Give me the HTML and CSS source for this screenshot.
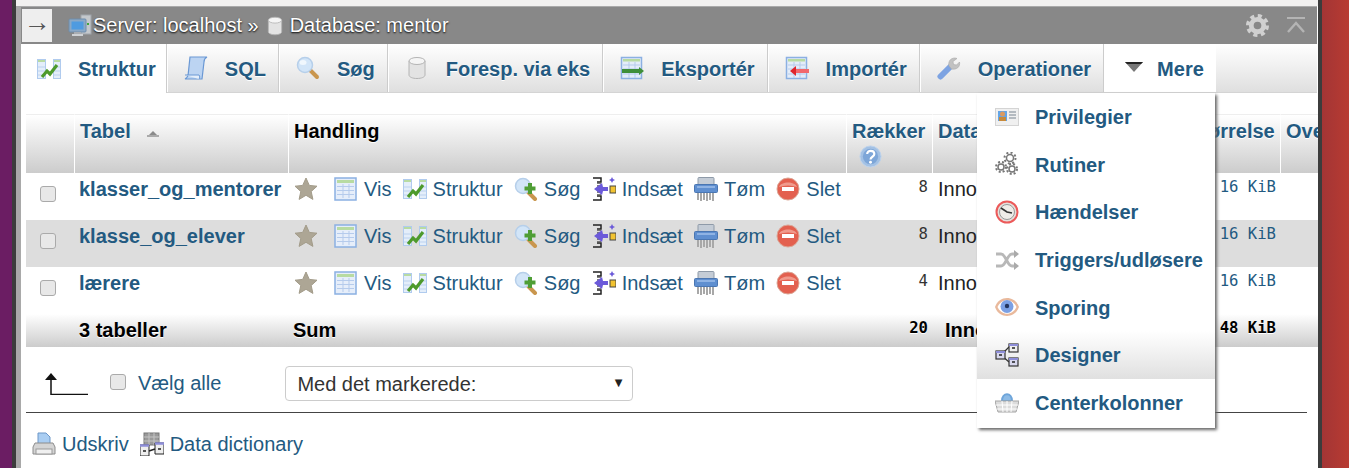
FILE: index.html
```html
<!DOCTYPE html>
<html lang="da">
<head>
<meta charset="utf-8">
<title>phpMyAdmin - mentor</title>
<link rel="stylesheet" href="styles.css">
</head>
<body>
<svg class="sprite" xmlns="http://www.w3.org/2000/svg">
  <symbol id="i-server" viewBox="0 0 24 24"><rect x="13" y="1" width="10" height="19" fill="#c4c8cc" stroke="#a0a5ab"/><rect x="19" y="9" width="2" height="2" fill="#3fa63f"/><rect x="1" y="5" width="17" height="13" rx="1" fill="#8aa8c6" stroke="#6f8dab"/><rect x="3.500" y="7.500" width="12" height="8" fill="#4f9be0"/><rect x="6" y="18" width="7" height="2" fill="#a9adb2"/><rect x="4" y="20" width="11" height="2" fill="#ced1d4"/></symbol>
  <symbol id="i-db" viewBox="0 0 24 24"><path d="M4 5v14c0 2 3.500 3.500 8 3.500s8-1.500 8-3.500V5z" fill="#e3e3e3" stroke="#b4b4b4"/><ellipse cx="12" cy="5" rx="8" ry="3.500" fill="#f5f5f5" stroke="#b4b4b4"/></symbol>
  <symbol id="i-struct" viewBox="0 0 24 24"><rect x="0.500" y="2.500" width="8" height="19" fill="#e4eefa" stroke="#b0cbee"/><rect x="16.500" y="2.500" width="7" height="19" fill="#e4eefa" stroke="#b0cbee"/><rect x="1" y="3" width="7" height="2" fill="#b8dba2"/><rect x="17" y="3" width="6" height="2" fill="#b8dba2"/><path d="M1 10h7M1 14h7M1 18h7M17 10h6M17 14h6M17 18h6" stroke="#bcd2ef"/><path d="M5 20l5-6 3 3 7-9" fill="none" stroke="#4d9a2c" stroke-width="3.200"/></symbol>
  <symbol id="i-sql" viewBox="0 0 24 24"><path d="M6 1h17c-2 1-3 3-3 5L18 23H1c2-1 3-3 3.200-5z" fill="#bcd4f2" stroke="#6a98d4" stroke-width="1.200"/><path d="M1 19h14c1 1 1 3 0 4" fill="#e4eefa" stroke="#6a98d4"/></symbol>
  <symbol id="i-search" viewBox="0 0 24 24"><path d="M14 14l7 7" stroke="#c9964e" stroke-width="4" stroke-linecap="round"/><circle cx="9" cy="9" r="7.500" fill="#d2e5f8" stroke="#b6cfea" stroke-width="1.500"/><ellipse cx="7" cy="6.500" rx="3.500" ry="2.500" fill="#f0f7fd"/></symbol>
  <symbol id="i-search-add" viewBox="0 0 24 24"><path d="M14 15l7 7" stroke="#c9964e" stroke-width="4" stroke-linecap="round"/><circle cx="9" cy="9" r="7.500" fill="#d2e5f8" stroke="#b6cfea" stroke-width="1.500"/><path d="M16 6v11M10.500 11.500h11" stroke="#4f9e35" stroke-width="4"/></symbol>
  <symbol id="i-export" viewBox="0 0 24 24"><rect x="1.500" y="1.500" width="20" height="21" fill="#e4edf9" stroke="#8bb0e2" stroke-width="1.500"/><rect x="3" y="3" width="17" height="2.500" fill="#b8dba2"/><path d="M3 9h17M3 13h17M3 18h17M9 6v16M15 6v16" stroke="#b5cbec"/><path d="M2 15h18" stroke="#3f8f3a" stroke-width="4"/><path d="M19 11l5 4-5 4z" fill="#3f8f3a"/></symbol>
  <symbol id="i-import" viewBox="0 0 24 24"><rect x="1.500" y="1.500" width="20" height="21" fill="#e4edf9" stroke="#8bb0e2" stroke-width="1.500"/><rect x="3" y="3" width="17" height="2.500" fill="#b8dba2"/><path d="M3 9h17M3 13h17M3 18h17M9 6v16M15 6v16" stroke="#b5cbec"/><path d="M10 15h14" stroke="#f2686c" stroke-width="4"/><path d="M11 10l-6 5 6 5z" fill="#e0262c"/></symbol>
  <symbol id="i-wrench" viewBox="0 0 24 24"><path d="M3.500 20.500L13 11" stroke="#7da3e2" stroke-width="6" stroke-linecap="round"/><path d="M12 10c-1-4 1-8 6-8l2 .5-4 3 .5 3 3 .5 3-3c1 5-3 8-8 7z" fill="#c2c2c2" stroke="#a8a8a8" stroke-width=".6"/></symbol>
  <symbol id="i-more" viewBox="0 0 24 24"><path d="M3 6h18l-9 10z" fill="#777"/><path d="M3 6h18l-2 2H5z" fill="#222"/></symbol>
  <symbol id="i-priv" viewBox="0 0 24 24"><rect x="0.500" y="3.500" width="23" height="17" fill="#f0f0f0" stroke="#d4d4d4"/><rect x="3" y="6" width="9" height="10" fill="#64a5e6"/><circle cx="7.500" cy="9" r="2.500" fill="#dc9a5f"/><rect x="4" y="12" width="7" height="4" fill="#c88a3a"/><path d="M14 7h7M14 10h7M14 13h7" stroke="#a0a8b0" stroke-width="1.400"/></symbol>
  <symbol id="i-routine" viewBox="0 0 24 24"><g fill="#fff" stroke="#777"><circle cx="15" cy="6" r="3.500" stroke-width="1.500"/><circle cx="15" cy="6" r="5.500" fill="none" stroke-width="2" stroke-dasharray="2 2.300"/><circle cx="6" cy="15" r="3" stroke-width="1.500"/><circle cx="6" cy="15" r="5" fill="none" stroke-width="2" stroke-dasharray="2 2"/><circle cx="17" cy="17" r="3" stroke-width="1.500"/><circle cx="17" cy="17" r="5" fill="none" stroke-width="2" stroke-dasharray="2 2"/></g></symbol>
  <symbol id="i-event" viewBox="0 0 24 24"><circle cx="12" cy="12" r="10.500" fill="#e4e0dc" stroke="#ec5a5a" stroke-width="2"/><circle cx="12" cy="12" r="7.500" fill="#efece8" stroke="#999"/><path d="M6 8l6 4 5 1" fill="none" stroke="#333" stroke-width="1.600"/></symbol>
  <symbol id="i-trigger" viewBox="0 0 24 24"><path d="M1 6h5c5 0 6 12 11 12h3M1 18h5c5 0 6-12 11-12h3" fill="none" stroke="#b8b8b8" stroke-width="2.800"/><path d="M19 2l5 4-5 4zM19 14l5 4-5 4z" fill="#aaa"/></symbol>
  <symbol id="i-eye" viewBox="0 0 24 24"><path d="M0 12c4-12 20-12 24 0-4 12-20 12-24 0z" fill="#e9b99c"/><path d="M2.500 12c4-9 15-9 19 0-4 9-15 9-19 0z" fill="#fff"/><circle cx="12" cy="11.500" r="6.500" fill="#7ba0e4"/><circle cx="12" cy="11" r="2.200" fill="#23355e"/></symbol>
  <symbol id="i-designer" viewBox="0 0 24 24"><path d="M6 12l8-8M6 12l8 7" fill="none" stroke="#333" stroke-width="1.200"/><g stroke="#333" stroke-width="1.200"><rect x="1" y="8" width="9" height="8" fill="#d8d8ee"/><rect x="14" y="1" width="9" height="8" fill="#eee"/><rect x="14" y="15" width="9" height="8" fill="#d8d8ee"/></g><path d="M4 12h3M17 5h3M17 19h3" stroke="#222" stroke-width="1.500"/><path d="M1 9h9M14 2h9M14 16h9" stroke="#8d8dd8" stroke-width="2"/></symbol>
  <symbol id="i-basket" viewBox="0 0 24 24"><path d="M7 11c0-9 10-9 10 0z" fill="#8dbbe6" stroke="#6ea5da" stroke-width="2"/><path d="M0 11h24l-3 11H3z" fill="#dcdcdc" stroke="#a4a4a4"/><path d="M1 15h22M2 19h20M7 11l1 11M12 11v11M17 11l-1 11" stroke="#fff"/></symbol>
  <symbol id="i-star" viewBox="0 0 24 24"><path d="M12 1l3.300 7.400 7.700 .8-5.800 5.300 1.700 7.900-6.900-4.100-6.900 4.100 1.700-7.900L1 9.200l7.700-.8z" fill="#ada695" stroke="#a39c8a" stroke-linejoin="round"/></symbol>
  <symbol id="i-table" viewBox="0 0 24 24"><rect x="1" y="1" width="21" height="22" fill="#e6eefa" stroke="#8bb0e2" stroke-width="1.500"/><rect x="3" y="3" width="17" height="3" fill="#b8dba2"/><path d="M3 9.500h17M3 13.500h17M3 17.500h17M9 7v14M15 7v14" stroke="#b5cbec"/></symbol>
  <symbol id="i-insert" viewBox="0 0 24 24"><path d="M1 1h8v4H5M5 19h4v4H1" fill="none" stroke="#222" stroke-width="1.500"/><path d="M5 6h4M5 9h3M5 15h3M5 18h4" stroke="#555" stroke-width="1.500"/><path d="M2 12l8-6 1 4h5v4h-5l-1 4z" fill="#6b5ad9"/><rect x="18" y="9" width="6" height="7" fill="#f2c330" stroke="#444"/><path d="M20 0l1 2 2 1-2 1-1 2-1-2-2-1 2-1z" fill="#6b5ad9"/></symbol>
  <symbol id="i-shred" viewBox="0 0 24 24"><path d="M4 15v8M7 15v9M10 15v8M13 15v9M16 15v8M19 15v9" stroke="#a8a8a8" stroke-width="2"/><rect x="4" y="0.500" width="16" height="8" rx="1" fill="#c4ccd6" stroke="#8e9aa8"/><rect x="0.500" y="7.500" width="23" height="8" rx="1" fill="#5f8fd0" stroke="#4a76b2"/><rect x="3" y="9" width="18" height="2" fill="#8fb3e4"/></symbol>
  <symbol id="i-delete" viewBox="0 0 24 24"><circle cx="12" cy="12" r="11" fill="#e3604f" stroke="#dca696"/><path d="M3 10c2-6 16-6 18 0-6-2-12-2-18 0z" fill="#f09a8c"/><rect x="6" y="10" width="12" height="4" fill="#fff"/></symbol>
  <symbol id="i-help" viewBox="0 0 24 24"><circle cx="12" cy="12" r="11" fill="#a3c1e4" stroke="#bcd2ec"/><circle cx="12" cy="12" r="8" fill="#7da6d8"/><path d="M8.500 9.500c0-4.500 7.500-4.500 7.500 0 0 3-4 2.500-4 5.500" fill="none" stroke="#fff" stroke-width="2.200"/><circle cx="12" cy="18" r="1.500" fill="#fff"/></symbol>
  <symbol id="i-print" viewBox="0 0 24 24"><path d="M6 1h8l4 4v7H6z" fill="#a9cdf2" stroke="#6d97c8"/><path d="M3 11h18l2 4v7H1v-7z" fill="#d4d4d4" stroke="#8c8c8c"/><rect x="4" y="17" width="16" height="5" fill="#f0f0f0" stroke="#9a9a9a"/></symbol>
  <symbol id="i-dict" viewBox="0 0 24 24"><rect x="4" y="1" width="15" height="12" fill="#9a9a9a" stroke="#777"/><path d="M4 5h15M4 9h15M9 1v12M14 1v12" stroke="#c4c4c4"/><path d="M0 13h9v11H0zM15 11h9v11h-9z" fill="#eee" stroke="#222"/><path d="M0 13.500h9M15 11.500h9" stroke="#8d8dd8" stroke-width="2.500"/><path d="M3 19h3M18 17h3M9 19l6-2" stroke="#222" stroke-width="1.500"/></symbol>
  <symbol id="i-sort" viewBox="0 0 12 6"><path d="M6 0l4 4H2z" fill="#8a8a8a"/><rect x="0" y="4" width="12" height="2" fill="#aaa"/></symbol>
  <symbol id="i-arrow" viewBox="0 0 43 23"><path d="M6 23V7M6 22.500h37" fill="none" stroke="#111" stroke-width="1.500"/><path d="M0 8l6-7 6 7z" fill="#111"/></symbol>
  <symbol id="i-gear" viewBox="0 0 24 24"><circle cx="12" cy="12" r="6.500" fill="none" stroke="#d0d0d0" stroke-width="5"/><circle cx="12" cy="12" r="10" fill="none" stroke="#d0d0d0" stroke-width="4" stroke-dasharray="4.200 3.650"/></symbol>
  <symbol id="i-collapse" viewBox="0 0 18 16"><path d="M0 1h18" stroke="#b4b4b4" stroke-width="2"/><path d="M1 15l8-9 8 9" fill="none" stroke="#b4b4b4" stroke-width="2.400"/></symbol>
</svg>
<div class="wall-left"></div>
<div class="window">
  <div class="strip"></div>
  <div class="page">
    <div class="topbar">
      <button class="toggle" type="button">→</button>
      <svg class="crumb-icon"><use href="#i-server"/></svg>
      <span class="crumb">Server: localhost »</span>
      <svg class="crumb-icon crumb-icon-db"><use href="#i-db"/></svg>
      <span class="crumb">Database: mentor</span>
      <span class="topbar-tools">
        <svg class="tool-gear"><use href="#i-gear"/></svg>
        <svg class="tool-collapse"><use href="#i-collapse"/></svg>
      </span>
    </div>
    <div class="tabs">
      <a class="tab tab-first tab-active"><svg class="ico"><use href="#i-struct"/></svg>Struktur</a>
      <a class="tab"><svg class="ico"><use href="#i-sql"/></svg>SQL</a>
      <a class="tab"><svg class="ico"><use href="#i-search"/></svg>Søg</a>
      <a class="tab"><svg class="ico"><use href="#i-db"/></svg>Foresp. via eks</a>
      <a class="tab"><svg class="ico"><use href="#i-export"/></svg>Eksportér</a>
      <a class="tab"><svg class="ico"><use href="#i-import"/></svg>Importér</a>
      <a class="tab"><svg class="ico"><use href="#i-wrench"/></svg>Operationer</a>
      <a class="tab tab-more"><svg class="ico"><use href="#i-more"/></svg>Mere</a>
      <ul class="menu">
        <li class="menu-item"><svg class="ico"><use href="#i-priv"/></svg>Privilegier</li>
        <li class="menu-item"><svg class="ico"><use href="#i-routine"/></svg>Rutiner</li>
        <li class="menu-item"><svg class="ico"><use href="#i-event"/></svg>Hændelser</li>
        <li class="menu-item"><svg class="ico"><use href="#i-trigger"/></svg>Triggers/udløsere</li>
        <li class="menu-item"><svg class="ico"><use href="#i-eye"/></svg>Sporing</li>
        <li class="menu-item menu-item-hover"><svg class="ico"><use href="#i-designer"/></svg>Designer</li>
        <li class="menu-item"><svg class="ico"><use href="#i-basket"/></svg>Centerkolonner</li>
      </ul>
    </div>
    <div class="content">
      <table class="data">
        <colgroup>
          <col class="c-check"><col class="c-name"><col class="c-action"><col class="c-rows"><col class="c-type"><col class="c-size"><col class="c-over">
        </colgroup>
        <thead>
          <tr>
            <th></th>
            <th><a class="th-link">Tabel</a><svg class="sort"><use href="#i-sort"/></svg></th>
            <th class="th-plain">Handling</th>
            <th><a class="th-link">Rækker</a><svg class="help"><use href="#i-help"/></svg></th>
            <th><a class="th-link">Datatype</a></th>
            <th><a class="th-link">Størrelse</a></th>
            <th><a class="th-link">Overhead</a></th>
          </tr>
        </thead>
        <tbody>
          <tr>
            <td class="td-check"><input class="check" type="checkbox"></td>
            <td class="td-name">klasser_og_mentorer</td>
            <td class="td-actions"><div class="actions">
              <svg class="ico star"><use href="#i-star"/></svg>
              <a class="act"><svg class="ico"><use href="#i-table"/></svg>Vis</a>
              <a class="act"><svg class="ico"><use href="#i-struct"/></svg>Struktur</a>
              <a class="act"><svg class="ico"><use href="#i-search-add"/></svg>Søg</a>
              <a class="act"><svg class="ico"><use href="#i-insert"/></svg>Indsæt</a>
              <a class="act"><svg class="ico"><use href="#i-shred"/></svg>Tøm</a>
              <a class="act"><svg class="ico"><use href="#i-delete"/></svg>Slet</a>
            </div></td>
            <td class="num">8</td>
            <td class="engine">InnoDB</td>
            <td class="num size">16 KiB</td>
            <td></td>
          </tr>
          <tr class="row-alt">
            <td class="td-check"><input class="check" type="checkbox"></td>
            <td class="td-name">klasse_og_elever</td>
            <td class="td-actions"><div class="actions">
              <svg class="ico star"><use href="#i-star"/></svg>
              <a class="act"><svg class="ico"><use href="#i-table"/></svg>Vis</a>
              <a class="act"><svg class="ico"><use href="#i-struct"/></svg>Struktur</a>
              <a class="act"><svg class="ico"><use href="#i-search-add"/></svg>Søg</a>
              <a class="act"><svg class="ico"><use href="#i-insert"/></svg>Indsæt</a>
              <a class="act"><svg class="ico"><use href="#i-shred"/></svg>Tøm</a>
              <a class="act"><svg class="ico"><use href="#i-delete"/></svg>Slet</a>
            </div></td>
            <td class="num">8</td>
            <td class="engine">InnoDB</td>
            <td class="num size">16 KiB</td>
            <td></td>
          </tr>
          <tr>
            <td class="td-check"><input class="check" type="checkbox"></td>
            <td class="td-name">lærere</td>
            <td class="td-actions"><div class="actions">
              <svg class="ico star"><use href="#i-star"/></svg>
              <a class="act"><svg class="ico"><use href="#i-table"/></svg>Vis</a>
              <a class="act"><svg class="ico"><use href="#i-struct"/></svg>Struktur</a>
              <a class="act"><svg class="ico"><use href="#i-search-add"/></svg>Søg</a>
              <a class="act"><svg class="ico"><use href="#i-insert"/></svg>Indsæt</a>
              <a class="act"><svg class="ico"><use href="#i-shred"/></svg>Tøm</a>
              <a class="act"><svg class="ico"><use href="#i-delete"/></svg>Slet</a>
            </div></td>
            <td class="num">4</td>
            <td class="engine">InnoDB</td>
            <td class="num size">16 KiB</td>
            <td></td>
          </tr>
        </tbody>
        <tfoot>
          <tr>
            <th></th>
            <th class="foot-label">3 tabeller</th>
            <th class="foot-label">Sum</th>
            <th class="num">20</th>
            <th class="engine-sum">InnoDB</th>
            <th class="num size">48 KiB</th>
            <th></th>
          </tr>
        </tfoot>
      </table>
      <div class="bulk">
        <svg class="up-arrow"><use href="#i-arrow"/></svg>
        <label class="check-all"><input class="check" type="checkbox"><a>Vælg alle</a></label>
        <span class="select-wrap"><select class="bulk-select"><option>Med det markerede:</option></select></span>
      </div>
      <hr class="rule">
      <div class="links">
        <a class="link"><svg class="ico"><use href="#i-print"/></svg>Udskriv</a>
        <a class="link"><svg class="ico"><use href="#i-dict"/></svg>Data dictionary</a>
      </div>
    </div>
  </div>
</div>
<div class="wall-right"></div>
</body>
</html>
```
FILE: styles.css
```css
* { box-sizing: border-box; }
html, body { margin: 0; height: 100%; }
body {
  display: flex;
  height: 468px;
  overflow: hidden;
  font-family: "Liberation Sans", Arial, sans-serif;
  font-size: 20px;
  color: #111;
  background: #fff;
}
.sprite { display: none; }
.wall-left { width: 12px; flex: none; background: #6b1d63; }
.wall-right { flex: 1; background: linear-gradient(90deg, #a33535, #b83b32); }
.window {
  width: 1310px;
  flex: none;
  display: flex;
  flex-direction: column;
  border-left: 4px solid #3c3c3c;
  border-right: 4px solid #3c3c3c;
  background: #f2f1f0;
}
.strip { height: 6px; flex: none; background: #f2f1f0; }
.page {
  flex: 1;
  min-height: 0;
  border-left: 5px solid #a9a9a9;
  background: #fff;
  overflow: hidden;
}

.topbar {
  height: 38px;
  margin-right: 1px;
  border-top: 1px solid #aaa;
  display: flex;
  align-items: center;
  background: #888;
  color: #fff;
  font-size: 20px;
  text-shadow: 0 1px 2px #000;
}
.toggle {
  width: 30px;
  height: 33px;
  margin: 0 15px 0 1px;
  padding: 0 0 6px;
  border: 0;
  background: #eee;
  color: #555;
  font: 27px/27px "Liberation Sans", Arial, sans-serif;
}
.crumb-icon { width: 26px; height: 24px; flex: none; }
.crumb-icon-db { width: 20px; margin: 0 5px 0 6px; }
.crumb { white-space: nowrap; }
.topbar-tools { margin-left: auto; display: flex; align-items: center; gap: 18px; margin-right: 12px; }
.tool-gear { width: 23px; height: 23px; }
.tool-collapse { width: 18px; height: 16px; margin-top: -2px; }

.tabs {
  position: relative;
  height: 49px;
  display: flex;
  margin-right: 1px;
  border-bottom: 1px solid #d4d4d4;
  background: linear-gradient(#fff, #dfdfdf);
}
.tab {
  display: flex;
  align-items: center;
  gap: 17px;
  padding: 2px 12px 0 16px;
  border-left: 1px solid #fff;
  border-right: 1px solid #ccc;
  font-weight: bold;
  color: #235a81;
  text-shadow: 0 1px 0 #fff;
  white-space: nowrap;
}
.tab .ico { margin-top: -2px; }
.tab-first { padding: 2px 10px 0 16px; border-left: 0; }
.tab-active { background: #fff; height: 49px; }
.tab-more { background: #fff; gap: 11px; border-right: 0; padding-left: 17px; }
.ico { width: 24px; height: 24px; flex: none; }

.menu {
  position: absolute;
  z-index: 5;
  left: 956px;
  top: 49px;
  width: 238px;
  height: 335px;
  margin: 0;
  padding: 0;
  list-style: none;
  background: #fff;
  box-shadow: 2px 2px 3px #666;
}
.menu-item {
  height: 47.6px;
  display: flex;
  align-items: center;
  gap: 16px;
  padding: 2px 0 0 18px;
  font-weight: bold;
  color: #235a81;
  white-space: nowrap;
}
.menu-item .ico { margin-top: -2px; }
.menu-item-hover { background: linear-gradient(#fff, #e0e0e0); }

.content { padding: 21px 0 0 5px; }
.data {
  table-layout: fixed;
  width: 1374px;
  border-collapse: separate;
  border-spacing: 0;
}
.c-check { width: 49px; }
.c-name { width: 214px; }
.c-action { width: 558px; }
.c-rows { width: 86px; }
.c-type { width: 250px; }
.c-size { width: 98px; }
.c-over { width: 119px; }

thead th {
  height: 59px;
  padding: 4px 5px 0;
  vertical-align: top;
  text-align: left;
  border-top: 1px solid #eee;
  border-right: 1px solid #fff;
  background: linear-gradient(#fff, #ccc);
  line-height: 24px;
  white-space: nowrap;
  overflow: hidden;
}
.th-link { color: #235a81; text-shadow: 0 1px 0 #fff; }
.th-plain { color: #000; text-shadow: 0 1px 0 #fff; }
.sort { width: 12px; height: 6px; margin: 0 0 1px 16px; }
.help { display: block; width: 23px; height: 23px; margin: 2px 0 0 7px; }

tbody td {
  height: 47px;
  padding: 4px 5px 0;
  vertical-align: top;
  line-height: 24px;
  white-space: nowrap;
  overflow: hidden;
}
.row-alt td { background: #ddd; }
tbody .td-check { padding-left: 14px; padding-top: 13px; }
.check {
  appearance: none;
  display: block;
  width: 16px;
  height: 16px;
  margin: 0;
  border: 1px solid #aaa;
  border-radius: 3px;
  background: #e8e8e8;
}
tbody .td-name { padding-left: 4px; font-weight: bold; color: #235a81; }
tbody .td-actions { padding-left: 4px; }
.actions { display: flex; align-items: center; gap: 11.2px; color: #235a81; }
.star { margin: 0 4.800px 0 1px; }
.act { display: inline-flex; align-items: center; gap: 6px; }
.num {
  text-align: right;
  font-family: "DejaVu Sans Mono", "Liberation Mono", monospace;
  font-size: 15.6px;
  color: #333;
}
tbody td.num { padding-top: 2px; }
.size { color: #235a81; }
.engine { color: #222; }

tfoot th {
  height: 33px;
  padding: 0 5px;
  text-align: left;
  color: #000;
  background: linear-gradient(#fff, #ccc);
  text-shadow: 0 1px 0 #fff;
  white-space: nowrap;
  overflow: hidden;
}
tfoot .foot-label { padding-left: 4px; }
tfoot th.num { text-align: right; padding-bottom: 6px; color: #000; }
tfoot th.size { color: #000; }
.engine-sum { padding-left: 12px; }

.bulk {
  display: flex;
  align-items: center;
  height: 35px;
  margin-top: 19px;
  padding-left: 19px;
}
.up-arrow { width: 43px; height: 23px; margin-right: 22px; flex: none; }
.check-all { display: flex; align-items: center; gap: 12px; color: #235a81; margin-right: 64px; }
.check-all .check { margin-top: -4px; }
.select-wrap { position: relative; display: block; }
.select-wrap::after {
  content: "▼";
  position: absolute;
  right: 11px;
  top: 10px;
  font: 10px/14px "DejaVu Sans", sans-serif;
  color: #222;
  pointer-events: none;
}
.bulk-select {
  appearance: none;
  display: block;
  width: 348px;
  height: 35px;
  padding: 0 11px;
  border: 1px solid #ccc;
  border-radius: 4px;
  background: #fff;
  color: #333;
  font: 20px "Liberation Sans", Arial, sans-serif;
}
.rule {
  height: 1px;
  width: 1281px;
  margin: 11px 0 0;
  border: 0;
  background: #444;
}
.links {
  display: flex;
  gap: 11px;
  margin-top: 19px;
  padding-left: 6px;
}
.link { display: inline-flex; align-items: center; gap: 6px; color: #235a81; }
```
